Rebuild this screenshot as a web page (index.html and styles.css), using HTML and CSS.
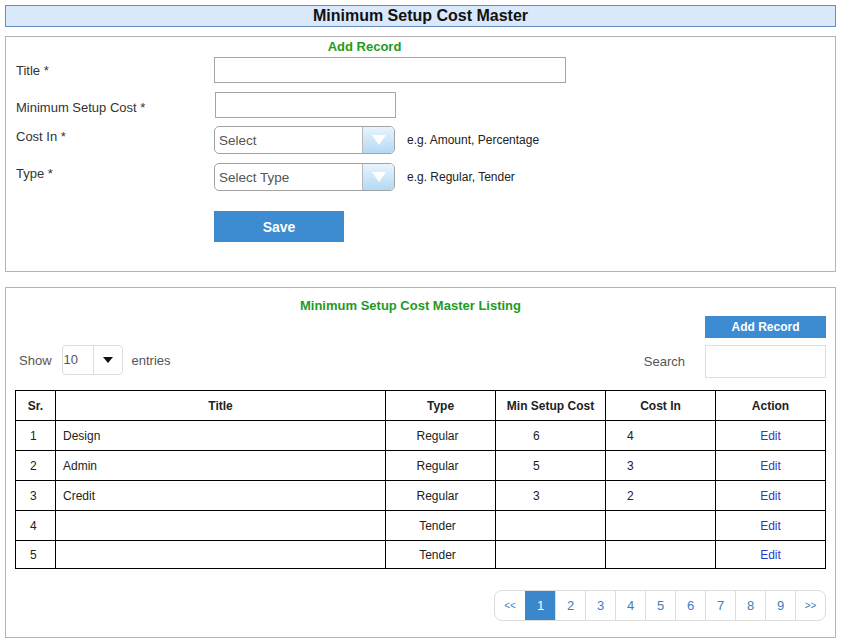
FILE: index.html
```html
<!DOCTYPE html>
<html lang="en">
<head>
<meta charset="utf-8">
<title>Minimum Setup Cost Master</title>
<link rel="stylesheet" href="styles.css">
</head>
<body>
<div class="page">
  <h1 class="page-title">Minimum Setup Cost Master</h1>

  <section class="panel form-panel">
    <h2 class="section-title form-title">Add Record</h2>

    <div class="form-row row-1">
      <label class="field-label">Title *</label>
      <input class="text-input input-wide" type="text">
    </div>

    <div class="form-row row-2">
      <label class="field-label">Minimum Setup Cost *</label>
      <input class="text-input input-short" type="text">
    </div>

    <div class="form-row row-3">
      <label class="field-label">Cost In *</label>
      <div class="select-box">
        <span class="select-text">Select</span>
        <span class="select-arrow"><svg width="14" height="10" viewBox="0 0 14 10"><path d="M0 0 L14 0 L7 10 Z" fill="#ffffff"/></svg></span>
      </div>
      <span class="hint">e.g. Amount, Percentage</span>
    </div>

    <div class="form-row row-4">
      <label class="field-label">Type *</label>
      <div class="select-box">
        <span class="select-text">Select Type</span>
        <span class="select-arrow"><svg width="14" height="10" viewBox="0 0 14 10"><path d="M0 0 L14 0 L7 10 Z" fill="#ffffff"/></svg></span>
      </div>
      <span class="hint">e.g. Regular, Tender</span>
    </div>

    <div class="form-actions">
      <button class="btn-save" type="button">Save</button>
    </div>
  </section>

  <section class="panel list-panel">
    <h2 class="section-title list-title">Minimum Setup Cost Master Listing</h2>
    <div class="add-row">
      <button class="btn-add" type="button">Add Record</button>
    </div>

    <div class="toolbar">
      <div class="show-group">
        <span class="tool-label">Show</span>
        <div class="len-select">
          <span class="len-value">10</span>
          <span class="len-arrow"><svg width="10" height="6" viewBox="0 0 10 6"><path d="M0 0 L10 0 L5 6 Z" fill="#111111"/></svg></span>
        </div>
        <span class="tool-label entries">entries</span>
      </div>
      <div class="search-group">
        <span class="tool-label">Search</span>
        <input class="search-input" type="text">
      </div>
    </div>

    <table class="data-table">
      <colgroup>
        <col class="c-sr"><col class="c-title"><col class="c-type"><col class="c-cost"><col class="c-in"><col class="c-action">
      </colgroup>
      <thead>
        <tr>
          <th>Sr.</th><th>Title</th><th>Type</th><th>Min Setup Cost</th><th>Cost In</th><th>Action</th>
        </tr>
      </thead>
      <tbody>
        <tr><td class="td-sr">1</td><td class="td-title">Design</td><td class="td-type">Regular</td><td class="td-cost">6</td><td class="td-in">4</td><td class="td-action"><a class="edit-link">Edit</a></td></tr>
        <tr><td class="td-sr">2</td><td class="td-title">Admin</td><td class="td-type">Regular</td><td class="td-cost">5</td><td class="td-in">3</td><td class="td-action"><a class="edit-link">Edit</a></td></tr>
        <tr><td class="td-sr">3</td><td class="td-title">Credit</td><td class="td-type">Regular</td><td class="td-cost">3</td><td class="td-in">2</td><td class="td-action"><a class="edit-link">Edit</a></td></tr>
        <tr><td class="td-sr">4</td><td class="td-title"></td><td class="td-type">Tender</td><td class="td-cost"></td><td class="td-in"></td><td class="td-action"><a class="edit-link">Edit</a></td></tr>
        <tr class="last-row"><td class="td-sr">5</td><td class="td-title"></td><td class="td-type">Tender</td><td class="td-cost"></td><td class="td-in"></td><td class="td-action"><a class="edit-link">Edit</a></td></tr>
      </tbody>
    </table>

    <div class="pager-row">
      <ul class="pager">
        <li class="pg pg-edge">&lt;&lt;</li>
        <li class="pg pg-active">1</li>
        <li class="pg">2</li>
        <li class="pg">3</li>
        <li class="pg">4</li>
        <li class="pg">5</li>
        <li class="pg">6</li>
        <li class="pg">7</li>
        <li class="pg">8</li>
        <li class="pg">9</li>
        <li class="pg pg-edge">&gt;&gt;</li>
      </ul>
    </div>
  </section>
</div>
</body>
</html>
```

FILE: styles.css
```css
* { box-sizing: border-box; }

html, body {
  margin: 0;
  padding: 0;
  background: #ffffff;
}

body {
  font-family: "Liberation Sans", Arial, sans-serif;
  color: #333333;
  font-size: 13px;
}

.page {
  padding: 5px 5px 0 5px;
  width: 841px;
}

.page-title {
  margin: 0;
  height: 22px;
  line-height: 20px;
  border: 1px solid #6c8ebf;
  background: #dae8fc;
  text-align: center;
  font-size: 16px;
  font-weight: bold;
  color: #111111;
}

.panel {
  border: 1px solid #b4b4b4;
  background: #ffffff;
}

.form-panel {
  margin-top: 9px;
  padding: 1px 10px 29px 10px;
}

.section-title {
  margin: 0;
  color: #1f9a1f;
  font-size: 13px;
  font-weight: bold;
  line-height: 18px;
}

.form-title {
  width: 697px;
  text-align: center;
}

.form-row {
  display: flex;
  align-items: flex-start;
}

.field-label {
  width: 198px;
  flex: none;
  font-size: 13px;
  line-height: 16px;
  color: #333333;
}

.row-1 { margin-top: 1px; }
.row-1 .field-label { padding-top: 6px; }
.row-2 { margin-top: 9px; }
.row-2 .field-label { padding-top: 8px; }
.row-3 { margin-top: 8px; align-items: center; }
.row-3 .field-label { align-self: flex-start; padding-top: 3px; }
.row-4 { margin-top: 9px; align-items: center; }
.row-4 .field-label { align-self: flex-start; padding-top: 3px; }

.text-input {
  height: 26px;
  border: 1px solid #a6a6a6;
  background: #ffffff;
  padding: 0 4px;
  font: inherit;
}

.input-wide { width: 352px; }
.input-short { width: 181px; margin-left: 1px; }

.select-box {
  width: 181px;
  height: 28px;
  border: 1px solid #a3a3a3;
  border-radius: 5px;
  display: flex;
  overflow: hidden;
  flex: none;
}

.select-text {
  flex: 1;
  padding-left: 4px;
  line-height: 27px;
  font-size: 13.5px;
  color: #555555;
}

.select-arrow {
  width: 32px;
  border-left: 1px solid #b8b8b8;
  background: linear-gradient(#e9f4fd, #b3d9f4);
  display: flex;
  align-items: center;
  justify-content: center;
}

.hint {
  margin-left: 12px;
  font-size: 12px;
  color: #222222;
}

.form-actions {
  margin-top: 20px;
  padding-left: 198px;
}

.btn-save {
  width: 130px;
  height: 31px;
  border: none;
  background: #3d8bd0;
  color: #ffffff;
  font-family: inherit;
  font-size: 14px;
  font-weight: bold;
  padding: 0;
}

.list-panel {
  margin-top: 15px;
  padding: 9px 9px 16px 9px;
}

.list-title {
  text-align: center;
  padding-right: 20px;
}

.add-row {
  display: flex;
  justify-content: flex-end;
  margin-top: 1px;
}

.btn-add {
  width: 121px;
  height: 22px;
  border: none;
  background: #3d8bd0;
  color: #ffffff;
  font-family: inherit;
  font-size: 12px;
  font-weight: bold;
  padding: 0;
}

.toolbar {
  margin-top: 7px;
  display: flex;
  justify-content: space-between;
  align-items: flex-start;
  height: 33px;
}

.show-group {
  display: flex;
  align-items: center;
  height: 30px;
  padding-left: 4px;
}

.tool-label {
  font-size: 13px;
  color: #555555;
}

.len-select {
  margin-left: 10px;
  width: 61px;
  height: 30px;
  border: 1px solid #dddddd;
  border-radius: 4px;
  display: flex;
}

.len-value {
  width: 31px;
  border-right: 1px solid #dddddd;
  padding-left: 1px;
  line-height: 28px;
  font-size: 13px;
  color: #555555;
}

.len-arrow {
  flex: 1;
  display: flex;
  align-items: center;
  justify-content: center;
}

.entries { margin-left: 9px; }

.search-group {
  display: flex;
  align-items: center;
  height: 33px;
}

.search-input {
  margin-left: 20px;
  width: 121px;
  height: 33px;
  border: 1px solid #dddddd;
  background: #ffffff;
}

.data-table {
  margin-top: 12px;
  width: 810px;
  border-collapse: collapse;
  table-layout: fixed;
  font-size: 12px;
  color: #222222;
}

.c-sr { width: 40px; }
.c-title { width: 330px; }
.c-type { width: 110px; }
.c-cost { width: 110px; }
.c-in { width: 110px; }
.c-action { width: 110px; }

.data-table th,
.data-table td {
  border: 1px solid #000000;
  height: 30px;
  padding: 0;
  vertical-align: middle;
}

.data-table .last-row td {
  height: 28px;
}

.data-table th {
  font-weight: bold;
  text-align: center;
  color: #222222;
}

.td-sr { padding-left: 14px !important; }
.td-title { padding-left: 7px !important; }
.td-type { text-align: center; padding-right: 6px !important; }
.td-cost { padding-left: 37px !important; }
.td-in { padding-left: 21px !important; }
.td-action { text-align: center; }

.edit-link {
  color: #2a3bc9;
  text-decoration: none;
}

.pager-row {
  margin-top: 21px;
  display: flex;
  justify-content: flex-end;
}

.pager {
  list-style: none;
  margin: 0;
  padding: 0;
  display: flex;
  border: 1px solid #dddddd;
  border-radius: 8px;
  overflow: hidden;
  height: 31px;
}

.pg {
  width: 30px;
  line-height: 29px;
  text-align: center;
  font-size: 13px;
  color: #3b7fc0;
  border-left: 1px solid #dddddd;
}

.pg:first-child { border-left: none; }

.pg-edge {
  font-size: 10px;
}

.pg-active {
  background: #3a87cc;
  color: #ffffff;
  border-left-color: #3a87cc;
}
```
